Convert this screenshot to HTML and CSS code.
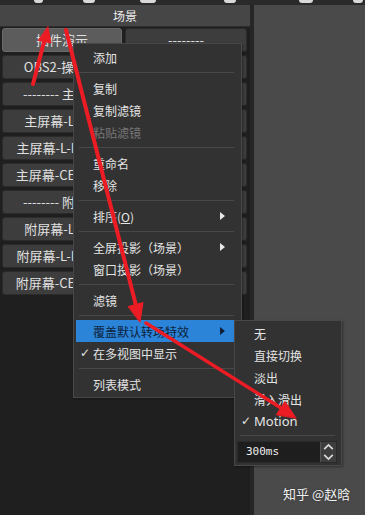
FILE: index.html
```html
<!DOCTYPE html>
<html lang="zh-CN">
<head>
<meta charset="utf-8">
<title>OBS 场景</title>
<link rel="stylesheet" href="styles.css">
</head>
<body>
<div class="app">
  <div class="topstrip">
    <span class="blob b1"></span><span class="blob b2"></span><span class="blob b3"></span><span class="blob b4"></span><span class="blob b5"></span><span class="blob b6"></span>
  </div>
  <div class="main">
    <section class="scenes">
      <div class="dock-title">场景</div>
      <div class="scene-grid">
        <div class="scene selected">插件演示</div>
        <div class="scene">--------</div>
        <div class="scene">OBS2-操控台</div>
        <div class="scene">OBS2-录制</div>
        <div class="scene">-------- 主屏幕</div>
        <div class="scene">--------</div>
        <div class="scene">主屏幕-Live1</div>
        <div class="scene">主屏幕-R</div>
        <div class="scene">主屏幕-L-Desk1</div>
        <div class="scene">主屏幕-R-D</div>
        <div class="scene">主屏幕-CENTER</div>
        <div class="scene">主屏幕-全屏</div>
        <div class="scene">-------- 附屏幕</div>
        <div class="scene">--------</div>
        <div class="scene">附屏幕-Live1</div>
        <div class="scene">附屏幕-R</div>
        <div class="scene">附屏幕-L-Desk1</div>
        <div class="scene">附屏幕-R-D</div>
        <div class="scene">附屏幕-CENTER</div>
        <div class="scene">附屏幕-全屏</div>
      </div>
    </section>
    <div class="splitter"></div>
    <section class="preview"></section>
  </div>

  <div class="menu ctx">
    <div class="item"><span class="check"></span><span class="label">添加</span></div>
    <div class="sep"></div>
    <div class="item"><span class="check"></span><span class="label">复制</span></div>
    <div class="item"><span class="check"></span><span class="label">复制滤镜</span></div>
    <div class="item disabled"><span class="check"></span><span class="label">粘贴滤镜</span></div>
    <div class="sep"></div>
    <div class="item"><span class="check"></span><span class="label">重命名</span></div>
    <div class="item"><span class="check"></span><span class="label">移除</span></div>
    <div class="sep"></div>
    <div class="item"><span class="check"></span><span class="label">排序(<u>O</u>)</span><span class="arrow"></span></div>
    <div class="sep"></div>
    <div class="item"><span class="check"></span><span class="label">全屏投影（场景）</span><span class="arrow"></span></div>
    <div class="item"><span class="check"></span><span class="label">窗口投影（场景）</span></div>
    <div class="sep"></div>
    <div class="item"><span class="check"></span><span class="label">滤镜</span></div>
    <div class="sep"></div>
    <div class="item active"><span class="check"></span><span class="label">覆盖默认转场特效</span><span class="arrow dark"></span></div>
    <div class="item"><span class="check">✓</span><span class="label">在多视图中显示</span></div>
    <div class="sep"></div>
    <div class="item"><span class="check"></span><span class="label">列表模式</span></div>
  </div>

  <div class="menu sub">
    <div class="item"><span class="check"></span><span class="label">无</span></div>
    <div class="item"><span class="check"></span><span class="label">直接切换</span></div>
    <div class="item"><span class="check"></span><span class="label">淡出</span></div>
    <div class="item"><span class="check"></span><span class="label">滑入滑出</span></div>
    <div class="item"><span class="check">✓</span><span class="label latin">Motion</span></div>
    <div class="sep"></div>
    <div class="spinbox">
      <div class="spin-value">300ms</div>
      <div class="spin-buttons">
        <svg class="spin-btn" width="14" height="9" viewBox="0 0 14 9"><polyline points="3,6.5 7,2.5 11,6.5" fill="none" stroke="#d8d8d8" stroke-width="1.6"/></svg>
        <svg class="spin-btn" width="14" height="9" viewBox="0 0 14 9"><polyline points="3,2.5 7,6.5 11,2.5" fill="none" stroke="#d8d8d8" stroke-width="1.6"/></svg>
      </div>
    </div>
  </div>

  <svg class="annot" width="365" height="515" viewBox="0 0 365 515">
    <g fill="#ec1c24" stroke="#ec1c24" stroke-linecap="round">
      <line x1="33" y1="84" x2="44.5" y2="40" stroke-width="4"/>
      <polygon points="48,27 51,43 38.5,40.5" stroke-width="1"/>
      <line x1="66" y1="30" x2="135.6" y2="304" stroke-width="4"/>
      <polygon points="140,322 143,302.5 128.5,306.5" stroke-width="1"/>
      <line x1="146" y1="323" x2="281" y2="408" stroke-width="3.5"/>
      <polygon points="296,418 285,401.5 276.5,414.5" stroke-width="1"/>
    </g>
  </svg>

  <div class="watermark">知乎 @赵晗</div>
</div>
</body>
</html>
```

FILE: styles.css
```css
* { box-sizing: border-box; }

html, body {
  margin: 0;
  padding: 0;
}

body {
  width: 365px;
  height: 515px;
  overflow: hidden;
  background: #1f1f1f;
  font-family: "Noto Sans CJK SC", "Noto Sans", sans-serif;
  color: #e2e2e2;
}

.app {
  position: relative;
  width: 365px;
  height: 515px;
  display: flex;
  flex-direction: column;
}

/* top strip with cut-off icons */
.topstrip {
  height: 5px;
  background: #2a2a2a;
  display: flex;
  align-items: flex-start;
}
.blob {
  height: 3px;
  background: #d9d9d9;
  border-radius: 0 0 5px 5px;
  display: block;
}
.b1 { margin-left: 34px; width: 9px; }
.b2 { margin-left: 40px; width: 12px; }
.b3 { margin-left: 45px; width: 16px; }
.b4 { margin-left: 68px; width: 12px; }
.b5 { margin-left: 63px; width: 14px; }
.b6 { margin-left: 40px; width: 10px; }

.main {
  flex: 1;
  display: flex;
}

.scenes {
  width: 250px;
  background: #1f1f1f;
  display: flex;
  flex-direction: column;
}

.dock-title {
  height: 22px;
  background: #464646;
  border-bottom: 1px solid #2e2e2e;
  text-align: center;
  font-size: 12px;
  line-height: 21px;
  color: #ededed;
}

.scene-grid {
  display: grid;
  grid-template-columns: 120px 122px;
  grid-auto-rows: 24px;
  column-gap: 3px;
  row-gap: 3px;
  padding: 1px 0 0 2px;
}

.scene {
  background: #3d3d3d;
  border: 1px solid #2b2b2b;
  border-radius: 3px;
  font-size: 13px;
  line-height: 22px;
  text-align: center;
  white-space: nowrap;
  overflow: hidden;
  color: #e0e0e0;
}
.scene.selected {
  background: #5c5c5c;
  border-color: #6a6a6a;
}

.splitter {
  width: 4px;
  background: #262626;
}

.preview {
  flex: 1;
  background: #4a4a4a;
}

/* menus */
.menu {
  position: absolute;
  background: #323232;
  border: 1px solid #484848;
  box-shadow: 1px 1px 2px rgba(0,0,0,0.35);
}

.ctx {
  left: 73px;
  top: 43px;
  width: 169px;
  height: 355px;
  padding: 2px 4px 2px 2px;
}

.sub {
  left: 234px;
  top: 320px;
  width: 108px;
  height: 146px;
  padding: 1px 3px 2px 2px;
}

.item {
  height: 22px;
  display: flex;
  align-items: center;
  font-size: 12px;
  color: #e4e4e4;
  white-space: nowrap;
}
.item.disabled { color: #777777; }
.item.active {
  background: #2b84d8;
  color: #0d1f3a;
}

.check {
  width: 17px;
  padding-left: 4px;
  font-size: 12px;
  font-family: "DejaVu Sans", sans-serif;
  color: #e4e4e4;
}

.label { flex: 1; }
.label u { text-decoration: underline; }
.label.latin {
  font-family: "Noto Sans", sans-serif;
  font-size: 13px;
}

.arrow {
  width: 0;
  height: 0;
  border-top: 4px solid transparent;
  border-bottom: 4px solid transparent;
  border-left: 5px solid #e8e8e8;
  margin-right: 12px;
}
.arrow.dark { border-left-color: #0d1f3a; }

.sep {
  height: 9px;
  display: flex;
  align-items: center;
  padding: 0 3px;
}
.sep::before {
  content: "";
  flex: 1;
  height: 1px;
  background: #484848;
}

.sub .sep { height: 7px; }

.spinbox {
  margin: 2px 1px 0 0;
  height: 22px;
  display: flex;
  background: #1e1e1e;
  border: 1px solid #2a2a2a;
}
.spin-value {
  flex: 1;
  font-family: "DejaVu Sans Mono", monospace;
  font-size: 11px;
  line-height: 20px;
  padding-left: 8px;
  color: #f0f0f0;
}
.spin-buttons {
  width: 16px;
  display: flex;
  flex-direction: column;
  background: #3d3d3d;
  border-left: 1px solid #555555;
}
.spin-btn {
  display: block;
  flex: 1;
  width: 15px;
}

.annot {
  position: absolute;
  left: 0;
  top: 0;
  pointer-events: none;
}

.watermark {
  position: absolute;
  left: 283px;
  top: 484px;
  font-size: 13px;
  color: #f2f2f2;
  text-shadow: 0 0 2px rgba(0,0,0,0.5);
  white-space: nowrap;
}
```
